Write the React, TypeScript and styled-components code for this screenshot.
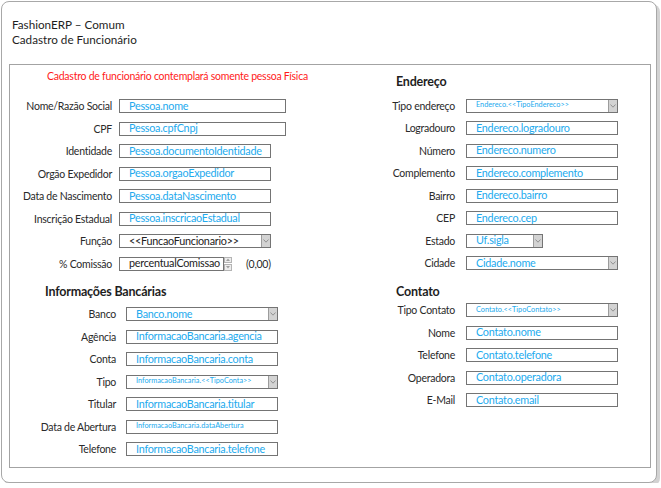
import styled, { createGlobalStyle } from 'styled-components';

const GlobalStyle = createGlobalStyle`
  body {
    margin: 0;
    background: #ffffff;
    font-family: Lato, 'Open Sans', sans-serif;
    color: #222222;
  }
`;

type RowSpec = {
  label: string;
  value: string;
  width: number;
  kind?: 'input' | 'select';
  small?: boolean;
  dark?: boolean;
};

const dadosPessoais: RowSpec[] = [
  { label: 'Nome/Razão Social', value: 'Pessoa.nome', width: 167 },
  { label: 'CPF', value: 'Pessoa.cpfCnpj', width: 167 },
  { label: 'Identidade', value: 'Pessoa.documentoIdentidade', width: 152 },
  { label: 'Orgão Expedidor', value: 'Pessoa.orgaoExpedidor', width: 152 },
  { label: 'Data de Nascimento', value: 'Pessoa.dataNascimento', width: 152 },
  { label: 'Inscrição Estadual', value: 'Pessoa.inscricaoEstadual', width: 152 },
  { label: 'Função', value: '<<FuncaoFuncionario>>', width: 152, kind: 'select', dark: true },
];

const bancarias: RowSpec[] = [
  { label: 'Banco', value: 'Banco.nome', width: 152, kind: 'select' },
  { label: 'Agência', value: 'InformacaoBancaria.agencia', width: 152 },
  { label: 'Conta', value: 'InformacaoBancaria.conta', width: 152 },
  { label: 'Tipo', value: 'InformacaoBancaria.<<TipoConta>>', width: 152, kind: 'select', small: true },
  { label: 'Titular', value: 'InformacaoBancaria.titular', width: 152 },
  { label: 'Data de Abertura', value: 'InformacaoBancaria.dataAbertura', width: 152, small: true },
  { label: 'Telefone', value: 'InformacaoBancaria.telefone', width: 152 },
];

const endereco: RowSpec[] = [
  { label: 'Tipo endereço', value: 'Endereco.<<TipoEndereco>>', width: 152, kind: 'select', small: true },
  { label: 'Logradouro', value: 'Endereco.logradouro', width: 152 },
  { label: 'Número', value: 'Endereco.numero', width: 152 },
  { label: 'Complemento', value: 'Endereco.complemento', width: 152 },
  { label: 'Bairro', value: 'Endereco.bairro', width: 152 },
  { label: 'CEP', value: 'Endereco.cep', width: 152 },
  { label: 'Estado', value: 'Uf.sigla', width: 77, kind: 'select' },
  { label: 'Cidade', value: 'Cidade.nome', width: 152, kind: 'select' },
];

const contato: RowSpec[] = [
  { label: 'Tipo Contato', value: 'Contato.<<TipoContato>>', width: 152, kind: 'select', small: true },
  { label: 'Nome', value: 'Contato.nome', width: 152 },
  { label: 'Telefone', value: 'Contato.telefone', width: 152 },
  { label: 'Operadora', value: 'Contato.operadora', width: 152 },
  { label: 'E-Mail', value: 'Contato.email', width: 152 },
];

const Chevron = () => (
  <svg width="6" height="4" viewBox="0 0 6 4">
    <path d="M0.5 0.5 L3 3.2 L5.5 0.5" fill="none" stroke="#8a8a8a" strokeWidth="0.9" />
  </svg>
);

const FormRow = ({
  row,
  labelWidth,
  gap,
}: {
  row: RowSpec;
  labelWidth: number;
  gap: number;
}) => (
  <StyledRow $gap={gap}>
    <StyledLabel $width={labelWidth}>{row.label}</StyledLabel>
    <StyledField $width={row.width} $small={row.small} $dark={row.dark}>
      <StyledValue>{row.value}</StyledValue>
      {row.kind === 'select' && (
        <StyledArrow>
          <Chevron />
        </StyledArrow>
      )}
    </StyledField>
  </StyledRow>
);

export default function App() {
  return (
    <>
      <GlobalStyle />
      <StyledWindow>
        <StyledHeader>
          <div>FashionERP – Comum</div>
          <div>Cadastro de Funcionário</div>
        </StyledHeader>

        <StyledPanel>
          <StyledLeft>
            <StyledNote>Cadastro de funcionário contemplará somente pessoa Física</StyledNote>
            <StyledRows $top={15.5}>
              {dadosPessoais.map((row) => (
                <FormRow key={row.label} row={row} labelWidth={102} gap={7} />
              ))}
              <StyledRow $gap={7}>
                <StyledLabel $width={102}>% Comissão</StyledLabel>
                <StyledField $width={105} $dark>
                  <StyledValue>percentualComissao</StyledValue>
                </StyledField>
                <StyledSpinner>
                  <StyledSpinButton>
                    <svg width="4" height="3" viewBox="0 0 4 3">
                      <path d="M0 3 L2 0.6 L4 3 Z" fill="#a0a0a0" />
                    </svg>
                  </StyledSpinButton>
                  <StyledSpinButton>
                    <svg width="4" height="3" viewBox="0 0 4 3">
                      <path d="M0 0 L2 2.4 L4 0 Z" fill="#a0a0a0" />
                    </svg>
                  </StyledSpinButton>
                </StyledSpinner>
                <StyledHint>(0,00)</StyledHint>
              </StyledRow>
            </StyledRows>

            <StyledHeading $left={35} $top={13.5}>
              Informações Bancárias
            </StyledHeading>
            <StyledRows $top={7}>
              {bancarias.map((row) => (
                <FormRow key={row.label} row={row} labelWidth={106} gap={10} />
              ))}
            </StyledRows>
          </StyledLeft>

          <StyledRight>
            <StyledHeading $left={66} $top={0}>
              Endereço
            </StyledHeading>
            <StyledRows $top={9}>
              {endereco.map((row) => (
                <FormRow key={row.label} row={row} labelWidth={125} gap={11} />
              ))}
            </StyledRows>

            <StyledHeading $left={66} $top={14.3}>
              Contato
            </StyledHeading>
            <StyledRows $top={2.7}>
              {contato.map((row) => (
                <FormRow key={row.label} row={row} labelWidth={125} gap={11} />
              ))}
            </StyledRows>
          </StyledRight>
        </StyledPanel>
      </StyledWindow>
    </>
  );
}

const StyledWindow = styled.div`
  box-sizing: border-box;
  margin: 1px 0 0 1px;
  width: 656px;
  height: 482px;
  border: 1px solid #a8a8a8;
  border-radius: 8px;
  box-shadow: 3px 3px 0 #d2d2d2;
  background: #ffffff;
`;

const StyledHeader = styled.div`
  padding: 14.5px 0 0 10px;
  font-size: 11.7px;
  line-height: 15px;
  color: #1e1e1e;
`;

const StyledPanel = styled.div`
  box-sizing: border-box;
  margin: 17.5px 0 0 7px;
  width: 642px;
  height: 404px;
  border: 1px solid #a3a3a3;
  display: grid;
  grid-template-columns: 320px 1fr;
`;

const StyledLeft = styled.div`
  display: flex;
  flex-direction: column;
  padding-top: 3.5px;
`;

const StyledRight = styled.div`
  display: flex;
  flex-direction: column;
  padding-top: 8.7px;
`;

const StyledNote = styled.div`
  margin-left: 37px;
  font-size: 10.5px;
  letter-spacing: -0.25px;
  line-height: 15px;
  color: #ff1a1a;
  white-space: nowrap;
`;

const StyledHeading = styled.div<{ $left: number; $top: number }>`
  margin: ${(p) => p.$top}px 0 0 ${(p) => p.$left}px;
  font-size: 12.5px;
  letter-spacing: -0.2px;
  font-weight: 700;
  line-height: 16px;
  color: #1e1e1e;
`;

const StyledRows = styled.div<{ $top: number }>`
  display: flex;
  flex-direction: column;
  gap: 8.5px;
  margin-top: ${(p) => p.$top}px;
`;

const StyledRow = styled.div<{ $gap: number }>`
  display: flex;
  align-items: center;
  gap: ${(p) => p.$gap}px;
  height: 14px;
`;

const StyledLabel = styled.div<{ $width: number }>`
  flex: none;
  width: ${(p) => p.$width}px;
  text-align: right;
  font-size: 10.5px;
  letter-spacing: -0.25px;
  line-height: 14px;
  color: #2a2a2a;
  white-space: nowrap;
`;

const StyledField = styled.div<{ $width: number; $small?: boolean; $dark?: boolean }>`
  box-sizing: border-box;
  flex: none;
  display: flex;
  align-items: stretch;
  width: ${(p) => p.$width}px;
  height: 14px;
  border: 1px solid #747474;
  padding-left: 9px;
  font-size: ${(p) => (p.$small ? '7.3px' : '10.8px')};
  letter-spacing: ${(p) => (p.$small ? '0' : '-0.25px')};
  line-height: 12px;
  color: ${(p) => (p.$dark ? '#222222' : '#22aaee')};
  background: #ffffff;
`;

const StyledValue = styled.span`
  flex: 1;
  display: flex;
  align-items: center;
  padding-bottom: 1px;
  white-space: nowrap;
`;

const StyledArrow = styled.span`
  flex: none;
  display: flex;
  align-items: center;
  justify-content: center;
  width: 8px;
  background: #d3d3d3;
  border-left: 1px solid #9c9c9c;
`;

const StyledSpinner = styled.div`
  display: flex;
  flex-direction: column;
  gap: 1px;
  margin-left: -7px;
  height: 14px;
`;

const StyledSpinButton = styled.span`
  box-sizing: border-box;
  display: flex;
  align-items: center;
  justify-content: center;
  width: 8px;
  height: 6.5px;
  border: 1px solid #b4b4b4;
  background: #ededed;
`;

const StyledHint = styled.span`
  margin-left: 7px;
  font-size: 10.5px;
  letter-spacing: -0.25px;
  color: #2a2a2a;
`;
